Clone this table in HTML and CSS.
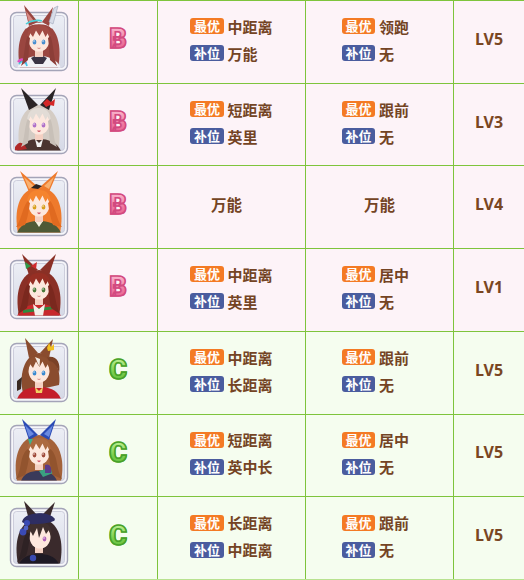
FILE: index.html
```html
<!DOCTYPE html>
<html lang="zh">
<head>
<meta charset="utf-8">
<title>表</title>
<link rel="stylesheet" href="styles.css">
</head>
<body>
<svg class="defs" width="0" height="0">
  <defs>
    <clipPath id="cp"><rect x="4.5" y="13.5" width="51" height="52" rx="3"/></clipPath>
    <linearGradient id="bg" x1="0" y1="0" x2="0" y2="1"><stop offset="0" stop-color="#eceef5"/><stop offset="1" stop-color="#d6d9e6"/></linearGradient>
  </defs>
</svg>
<div class="table">
  <!-- row 1 -->
  <div class="row b">
    <div class="cell av">
      <svg viewBox="0 0 60 80" width="60" height="80">
        <rect x="1.5" y="10.5" width="57" height="58" rx="6" fill="#f6f6fa" stroke="#a4a4b8" stroke-width="1.4"/>
        <rect x="4.5" y="13.5" width="51" height="52" rx="3" fill="url(#bg)" stroke="#c4c4d4" stroke-width="0.8"/>
        <g clip-path="url(#cp)">
          <path d="M11 66 C7 46 10 22 30 20 C50 22 53 46 49 66Z" fill="#9a4640"/>
          <path d="M8 66 C12 57 21 54 30 54 C39 54 48 57 52 66Z" fill="#f2f2f6"/>
          <path d="M22 56 L30 52 L38 56 L34 62 L26 62Z" fill="#3a3444"/>
          <path d="M9 60 C12 56 16 57 17 62" stroke="#e050c8" stroke-width="2.4" fill="none"/>
          <path d="M10 62 C13 58 17 59 18 64" stroke="#40c8e8" stroke-width="1.6" fill="none"/>
          <rect x="26" y="46" width="8" height="9" fill="#f4d0c2"/>
          <ellipse cx="30" cy="38" rx="10.5" ry="11.5" fill="#fde8de"/>
          <ellipse cx="25.5" cy="40" rx="1.9" ry="2.6" fill="#4a90d0"/>
          <ellipse cx="34.5" cy="40" rx="1.9" ry="2.6" fill="#4a90d0"/>
          <circle cx="25" cy="39" r="0.7" fill="#fff"/><circle cx="34" cy="39" r="0.7" fill="#fff"/>
          <path d="M28.5 46 Q30 47 31.5 46" stroke="#c06060" stroke-width="0.7" fill="none"/>
          <path d="M18.5 40 C17 27 23 23 30 23 C37 23 43 27 41.5 40 L39 31 L36.5 35 L33.5 28.5 L30.5 34 L27 28.5 L24 35 L21 31Z" fill="#a24c44"/>
          <path d="M18.5 34 C15 44 16 54 12 64 L19 58 C20 50 20 42 21 36Z" fill="#8c3e38"/>
          <path d="M41.5 34 C45 44 44 54 48 64 L41 58 C40 50 40 42 39 36Z" fill="#8c3e38"/>
          <path d="M17 26 C22 20 38 20 43 26" stroke="#f4f4f8" stroke-width="1.6" fill="none"/>
        </g>
        <path d="M20 24 L15 3 L29 20Z" fill="#9a4640"/>
        <path d="M20 21 L17 9 L25 19Z" fill="#d88a86"/>
        <path d="M40 24 L44 5 L33 20Z" fill="#9a4640"/>
        <path d="M45 6 L49 4 L44 22 L40 20Z" fill="#d8dce8" stroke="#9ca4b8" stroke-width="0.6"/>
        <path d="M17 22 C22 18 30 18 33 19" stroke="#48d0d8" stroke-width="1.6" fill="none"/>
      </svg>
    </div>
    <div class="cell grade gb"><span>B</span></div>
    <div class="cell"><div class="pos"><div class="ln"><span class="tag best">最优</span>中距离</div><div class="ln"><span class="tag sub">补位</span>万能</div></div></div>
    <div class="cell c4"><div class="pos"><div class="ln"><span class="tag best">最优</span>领跑</div><div class="ln"><span class="tag sub">补位</span>无</div></div></div>
    <div class="cell lv">LV5</div>
  </div>
  <!-- row 2 -->
  <div class="row b">
    <div class="cell av">
      <svg viewBox="0 0 60 80" width="60" height="80">
        <rect x="1.5" y="10.5" width="57" height="58" rx="6" fill="#f6f6fa" stroke="#a4a4b8" stroke-width="1.4"/>
        <rect x="4.5" y="13.5" width="51" height="52" rx="3" fill="url(#bg)" stroke="#c4c4d4" stroke-width="0.8"/>
        <g clip-path="url(#cp)">
          <path d="M11 66 C7 46 10 22 30 20 C50 22 53 46 49 66Z" fill="#d4ccc4"/>
          <path d="M8 66 C12 57 21 54 30 54 C39 54 48 57 52 66Z" fill="#4a3430"/>
          <path d="M6 62 C10 56 14 56 18 64 L6 66Z" fill="#b02828"/>
          <path d="M26 54 L30 58 L34 54 L32 62 L28 62Z" fill="#f0f0f0"/>
          <rect x="26" y="46" width="8" height="9" fill="#f4d0c2"/>
          <ellipse cx="30" cy="38" rx="10.5" ry="11.5" fill="#fde8de"/>
          <ellipse cx="25.5" cy="40" rx="1.9" ry="2.6" fill="#b070c8"/>
          <ellipse cx="34.5" cy="40" rx="1.9" ry="2.6" fill="#b070c8"/>
          <circle cx="25" cy="39" r="0.7" fill="#fff"/><circle cx="34" cy="39" r="0.7" fill="#fff"/>
          <path d="M28 45.5 Q30 48.5 32 45.5Z" fill="#d05a6a"/>
          <path d="M18.5 40 C17 27 23 23 30 23 C37 23 43 27 41.5 40 L39 31 L36.5 35 L33.5 28.5 L30.5 34 L27 28.5 L24 35 L21 31Z" fill="#e2dcd6"/>
          <path d="M18.5 34 C15 44 16 54 12 62 L19 58 C20 50 20 42 21 36Z" fill="#c8c0b8"/>
          <path d="M41.5 34 C45 44 44 54 48 62 L41 58 C40 50 40 42 39 36Z" fill="#c8c0b8"/>
        </g>
        <path d="M20 25 L12 3 L29 20Z" fill="#2a2426"/>
        <path d="M40 25 L47 3 L31 20Z" fill="#2a2426"/>
        <path d="M34 18 L38 14 L42 17 L46 14 L45 21 L41 20 L37 22Z" fill="#d42828"/>
      </svg>
    </div>
    <div class="cell grade gb"><span>B</span></div>
    <div class="cell"><div class="pos"><div class="ln"><span class="tag best">最优</span>短距离</div><div class="ln"><span class="tag sub">补位</span>英里</div></div></div>
    <div class="cell c4"><div class="pos"><div class="ln"><span class="tag best">最优</span>跟前</div><div class="ln"><span class="tag sub">补位</span>无</div></div></div>
    <div class="cell lv">LV3</div>
  </div>
  <!-- row 3 -->
  <div class="row b">
    <div class="cell av">
      <svg viewBox="0 0 60 80" width="60" height="80">
        <rect x="1.5" y="10.5" width="57" height="58" rx="6" fill="#f6f6fa" stroke="#a4a4b8" stroke-width="1.4"/>
        <rect x="4.5" y="13.5" width="51" height="52" rx="3" fill="url(#bg)" stroke="#c4c4d4" stroke-width="0.8"/>
        <g clip-path="url(#cp)">
          <path d="M9 66 C5 46 8 22 30 20 C52 22 55 46 51 66Z" fill="#ee7a2c"/>
          <path d="M8 66 C12 56 21 54 30 54 C39 54 48 56 52 66Z" fill="#4e5a36"/>
          <path d="M26 54 L30 60 L34 54Z" fill="#f4f0e0"/>
          <rect x="26" y="46" width="8" height="9" fill="#f4d0c2"/>
          <ellipse cx="30" cy="38" rx="10.5" ry="11.5" fill="#fde8de"/>
          <ellipse cx="25.5" cy="40" rx="1.9" ry="2.6" fill="#d8a020"/>
          <ellipse cx="34.5" cy="40" rx="1.9" ry="2.6" fill="#d8a020"/>
          <circle cx="25" cy="39" r="0.7" fill="#fff"/><circle cx="34" cy="39" r="0.7" fill="#fff"/>
          <path d="M28 45.5 Q30 49 32 45.5Z" fill="#d05a6a"/>
          <path d="M18.5 40 C17 27 23 23 30 23 C37 23 43 27 41.5 40 L39 31 L36.5 35 L33.5 28.5 L30.5 34 L27 28.5 L24 35 L21 31Z" fill="#f5842e"/>
          <path d="M18.5 34 C13 42 12 54 7 60 L16 58 C19 50 20 42 21 36Z" fill="#e06a20"/>
          <path d="M41.5 34 C47 42 48 54 53 60 L44 58 C41 50 40 42 39 36Z" fill="#e06a20"/>
        </g>
        <path d="M20 25 L11 4 L29 20Z" fill="#ee7a2c"/>
        <path d="M20 22 L15 10 L25 19Z" fill="#f8b070"/>
        <path d="M40 25 L49 4 L31 20Z" fill="#ee7a2c"/>
        <path d="M40 22 L45 10 L35 19Z" fill="#f8b070"/>
        <path d="M22 21 L27 17 L33 19 L29 22Z" fill="#2a2222"/>
      </svg>
    </div>
    <div class="cell grade gb"><span>B</span></div>
    <div class="cell txt c3"><span class="plain">万能</span></div>
    <div class="cell txt"><span class="plain">万能</span></div>
    <div class="cell lv">LV4</div>
  </div>
  <!-- row 4 -->
  <div class="row b">
    <div class="cell av">
      <svg viewBox="0 0 60 80" width="60" height="80">
        <rect x="1.5" y="10.5" width="57" height="58" rx="6" fill="#f6f6fa" stroke="#a4a4b8" stroke-width="1.4"/>
        <rect x="4.5" y="13.5" width="51" height="52" rx="3" fill="url(#bg)" stroke="#c4c4d4" stroke-width="0.8"/>
        <g clip-path="url(#cp)">
          <path d="M10 66 C6 46 9 22 30 20 C51 22 54 46 50 66Z" fill="#8a3026"/>
          <path d="M8 66 C12 57 21 54 30 54 C39 54 48 57 52 66Z" fill="#c8282c"/>
          <path d="M14 60 L46 56 L46 59 L14 63Z" fill="#2e8a3e"/>
          <path d="M24 54 L30 59 L36 54 L34 66 L26 66Z" fill="#f4f0ea"/>
          <rect x="26" y="46" width="8" height="9" fill="#f4d0c2"/>
          <ellipse cx="30" cy="38" rx="10.5" ry="11.5" fill="#fde8de"/>
          <ellipse cx="25.5" cy="40" rx="1.9" ry="2.4" fill="#4a7a3a"/>
          <ellipse cx="34.5" cy="40" rx="1.9" ry="2.4" fill="#4a7a3a"/>
          <circle cx="25" cy="39" r="0.7" fill="#fff"/><circle cx="34" cy="39" r="0.7" fill="#fff"/>
          <path d="M28.5 46 Q30 47 31.5 46" stroke="#c06060" stroke-width="0.7" fill="none"/>
          <path d="M18.5 40 C17 27 23 23 30 23 C37 23 43 27 41.5 40 L39 31 L36.5 35 L33.5 28.5 L30.5 34 L27 28.5 L24 35 L21 31Z" fill="#962f24"/>
          <path d="M18.5 34 C13 44 14 54 9 64 L18 58 C20 50 20 42 21 36Z" fill="#7a281e"/>
          <path d="M41.5 34 C47 44 46 54 51 64 L42 58 C40 50 40 42 39 36Z" fill="#7a281e"/>
        </g>
        <path d="M20 25 L13 4 L29 20Z" fill="#8a3026"/>
        <path d="M40 25 L47 4 L31 20Z" fill="#8a3026"/>
        <path d="M16 12 L22 16 L17 19Z" fill="#2e9a48"/>
        <path d="M22 16 L28 12 L27 19Z" fill="#d02c30"/>
      </svg>
    </div>
    <div class="cell grade gb"><span>B</span></div>
    <div class="cell"><div class="pos"><div class="ln"><span class="tag best">最优</span>中距离</div><div class="ln"><span class="tag sub">补位</span>英里</div></div></div>
    <div class="cell c4"><div class="pos"><div class="ln"><span class="tag best">最优</span>居中</div><div class="ln"><span class="tag sub">补位</span>无</div></div></div>
    <div class="cell lv">LV1</div>
  </div>
  <!-- row 5 -->
  <div class="row c">
    <div class="cell av">
      <svg viewBox="0 0 60 80" width="60" height="80">
        <rect x="1.5" y="10.5" width="57" height="58" rx="6" fill="#f6f6fa" stroke="#a4a4b8" stroke-width="1.4"/>
        <rect x="4.5" y="13.5" width="51" height="52" rx="3" fill="url(#bg)" stroke="#c4c4d4" stroke-width="0.8"/>
        <g clip-path="url(#cp)">
          <path d="M14 60 C10 44 14 22 30 20 C48 22 52 40 50 52Z" fill="#8a4c2e"/>
          <path d="M8 66 C12 56 21 54 30 54 C39 54 48 56 52 66Z" fill="#c41e2a"/>
          <path d="M26 54 L30 58 L34 54 L33 60 L27 60Z" fill="#f0d060"/>
          <rect x="26" y="46" width="8" height="9" fill="#f4d0c2"/>
          <ellipse cx="30" cy="38" rx="10.5" ry="11.5" fill="#fde8de"/>
          <ellipse cx="25.5" cy="40" rx="1.9" ry="2.6" fill="#3a8ad0"/>
          <ellipse cx="34.5" cy="40" rx="1.9" ry="2.6" fill="#3a8ad0"/>
          <circle cx="25" cy="39" r="0.7" fill="#fff"/><circle cx="34" cy="39" r="0.7" fill="#fff"/>
          <path d="M28.5 46 Q30 47 31.5 46" stroke="#c06060" stroke-width="0.7" fill="none"/>
          <path d="M18.5 40 C17 27 23 23 30 23 C37 23 43 27 41.5 40 L39 31 L36.5 35 L33.5 28.5 L30.5 34 L27 28.5 L24 35 L21 31Z" fill="#8e5030"/>
          <path d="M26 24 C28 28 29 31 30.5 34 L31 26Z" fill="#f4ece4"/>
          <path d="M38 24 C48 22 52 30 50 40 C48 32 44 28 40 28Z" fill="#7a4228"/>
          <path d="M8 48 L13 44 L12 56 L8 58Z" fill="#3a2a22"/>
        </g>
        <path d="M20 25 L16 5 L29 20Z" fill="#8a4c2e"/>
        <path d="M40 25 L44 6 L31 20Z" fill="#8a4c2e"/>
        <path d="M38 15 L40 10 L42 14 L45 11 L45 17 L39 18Z" fill="#f2c020"/>
      </svg>
    </div>
    <div class="cell grade gc"><span>C</span></div>
    <div class="cell"><div class="pos"><div class="ln"><span class="tag best">最优</span>中距离</div><div class="ln"><span class="tag sub">补位</span>长距离</div></div></div>
    <div class="cell c4"><div class="pos"><div class="ln"><span class="tag best">最优</span>跟前</div><div class="ln"><span class="tag sub">补位</span>无</div></div></div>
    <div class="cell lv">LV5</div>
  </div>
  <!-- row 6 -->
  <div class="row c">
    <div class="cell av">
      <svg viewBox="0 0 60 80" width="60" height="80">
        <rect x="1.5" y="10.5" width="57" height="58" rx="6" fill="#f6f6fa" stroke="#a4a4b8" stroke-width="1.4"/>
        <rect x="4.5" y="13.5" width="51" height="52" rx="3" fill="url(#bg)" stroke="#c4c4d4" stroke-width="0.8"/>
        <g clip-path="url(#cp)">
          <path d="M8 66 C4 46 8 22 30 20 C52 22 56 46 52 66Z" fill="#a4623a"/>
          <path d="M12 66 C15 58 22 56 30 56 C38 56 45 58 48 66Z" fill="#3a3a5a"/>
          <path d="M30 56 L42 52 L44 58 L34 62Z" fill="#3aa080"/>
          <path d="M36 50 C40 48 44 52 42 58 L36 58Z" fill="#5a3a8a"/>
          <rect x="26" y="46" width="8" height="9" fill="#f4d0c2"/>
          <ellipse cx="30" cy="38" rx="10.5" ry="11.5" fill="#fde8de"/>
          <ellipse cx="25.5" cy="40" rx="1.9" ry="2.4" fill="#a04a3a"/>
          <ellipse cx="34.5" cy="40" rx="1.9" ry="2.4" fill="#a04a3a"/>
          <circle cx="25" cy="39" r="0.7" fill="#fff"/><circle cx="34" cy="39" r="0.7" fill="#fff"/>
          <path d="M28 45.5 Q30 49 32 45.5Z" fill="#d05a6a"/>
          <path d="M18.5 40 C17 27 23 23 30 23 C37 23 43 27 41.5 40 L39 31 L36.5 35 L33.5 28.5 L30.5 34 L27 28.5 L24 35 L21 31Z" fill="#ac6a40"/>
          <path d="M18.5 34 C10 42 14 52 7 64 L16 60 C19 52 20 42 21 36Z" fill="#92542e"/>
          <path d="M41.5 34 C50 42 46 52 53 64 L44 60 C41 52 40 42 39 36Z" fill="#92542e"/>
        </g>
        <path d="M20 25 L13 4 L29 20Z" fill="#2a4ab4"/>
        <path d="M20 22 L16 10 L25 19Z" fill="#6a8ae0"/>
        <path d="M40 25 L47 4 L31 20Z" fill="#2a4ab4"/>
        <path d="M40 22 L44 10 L35 19Z" fill="#6a8ae0"/>
        <path d="M19 24 L21 30 L24 24Z" fill="#40b088"/>
      </svg>
    </div>
    <div class="cell grade gc"><span>C</span></div>
    <div class="cell"><div class="pos"><div class="ln"><span class="tag best">最优</span>短距离</div><div class="ln"><span class="tag sub">补位</span>英中长</div></div></div>
    <div class="cell c4"><div class="pos"><div class="ln"><span class="tag best">最优</span>居中</div><div class="ln"><span class="tag sub">补位</span>无</div></div></div>
    <div class="cell lv">LV5</div>
  </div>
  <!-- row 7 -->
  <div class="row c">
    <div class="cell av">
      <svg viewBox="0 0 60 80" width="60" height="80">
        <rect x="1.5" y="10.5" width="57" height="58" rx="6" fill="#f6f6fa" stroke="#a4a4b8" stroke-width="1.4"/>
        <rect x="4.5" y="13.5" width="51" height="52" rx="3" fill="url(#bg)" stroke="#c4c4d4" stroke-width="0.8"/>
        <g clip-path="url(#cp)">
          <path d="M9 66 C5 46 8 22 30 20 C52 22 55 46 51 66Z" fill="#3a2a2c"/>
          <path d="M10 66 C14 58 22 56 30 56 C38 56 46 58 50 66Z" fill="#1e1a24"/>
          <circle cx="24" cy="60" r="3.2" fill="#3a4ab0"/>
          <rect x="26" y="46" width="8" height="9" fill="#f4d0c2"/>
          <ellipse cx="31" cy="39" rx="10.5" ry="11.5" fill="#fde8de"/>
          <ellipse cx="35.5" cy="41" rx="1.9" ry="2.4" fill="#b060b8"/>
          <circle cx="35" cy="40" r="0.7" fill="#fff"/>
          <path d="M18 44 C17 27 22 24 30 24 C37 24 44 27 42.5 40 L40 32 L37 36 L34 29 L30 40 L28 30 L24 38 L21 32Z" fill="#40302e"/>
          <path d="M18 34 C12 44 14 54 8 64 L17 58 C20 50 20 42 21 36Z" fill="#2e2224"/>
          <path d="M13 24 C14 14 40 12 46 22 C42 26 18 28 13 24Z" fill="#2e2e62"/>
          <circle cx="14" cy="34" r="3.4" fill="#3a4ab4"/>
          <circle cx="17" cy="30" r="2.4" fill="#5062c8"/>
        </g>
        <path d="M20 22 L15 3 L29 18Z" fill="#3a2a2c"/>
        <path d="M40 22 L46 4 L32 18Z" fill="#3a2a2c"/>
        <path d="M14 23 C15 14 40 12 46 21 C42 25 18 27 14 23Z" fill="#2e2e62"/>
        <circle cx="18" cy="25" r="3" fill="#3a4ab4"/>
      </svg>
    </div>
    <div class="cell grade gc"><span>C</span></div>
    <div class="cell"><div class="pos"><div class="ln"><span class="tag best">最优</span>长距离</div><div class="ln"><span class="tag sub">补位</span>中距离</div></div></div>
    <div class="cell c4"><div class="pos"><div class="ln"><span class="tag best">最优</span>跟前</div><div class="ln"><span class="tag sub">补位</span>无</div></div></div>
    <div class="cell lv">LV5</div>
  </div>
</div>
</body>
</html>
```

FILE: styles.css
```css
* { box-sizing: border-box; }
html, body { margin: 0; padding: 0; background: #ffffff; }
body {
  font-family: "Noto Sans CJK SC", "Noto Sans", sans-serif;
  color: #744424;
  width: 524px;
  height: 580px;
  overflow: hidden;
}
.defs { position: absolute; width: 0; height: 0; }
.table {
  display: grid;
  grid-template-columns: 78px 78px 147px 147px 70px;
  grid-template-rows: repeat(7, 1fr);
  gap: 1px;
  background: #7ec43c;
  padding-top: 1px;
  height: 580px;
  width: 524px;
  border-bottom: 1px solid #b8e290;
}
.row { display: contents; }
.cell {
  display: flex;
  align-items: center;
  justify-content: center;
  min-width: 0;
  overflow: visible;
}
.row.b .cell { background: #fdf3f8; }
.row.c .cell { background: #f5fdef; }
.av svg { display: block; }
.grade span {
  font-family: Roboto, "Noto Sans", sans-serif;
  font-weight: 900;
  font-size: 27px;
  line-height: 1;
  color: transparent;
  -webkit-background-clip: text;
  background-clip: text;
  margin-top: -4px;
}
.gb span {
  background-image: linear-gradient(#fbbcd2, #ee7aa2 55%, #e2588a);
  -webkit-text-stroke: 1.6px #d24a80;
}
.gc span {
  background-image: linear-gradient(#c6f49a, #7cd050 55%, #5cb836);
  -webkit-text-stroke: 1.6px #48a02a;
}
.pos { display: flex; flex-direction: column; margin-bottom: 4px; }
.c4 .pos { margin-right: 8px; }
.ln {
  display: flex;
  align-items: center;
  height: 27px;
  font-size: 15px;
  font-weight: 700;
  white-space: nowrap;
}
.tag {
  display: inline-block;
  height: 16px;
  line-height: 16px;
  padding: 0 3.5px;
  margin-right: 4px;
  border-radius: 3px;
  color: #ffffff;
  font-size: 13px;
  font-weight: 700;
}
.best { background: #f47a24; }
.sub { background: #4a5c9e; }
.plain { font-size: 15.5px; font-weight: 700; margin-bottom: 6px; }
.c3 .plain { margin-right: 10px; }
.lv {
  font-family: "Noto Sans", "Open Sans", sans-serif;
  font-weight: 700;
  font-size: 16px;
  color: #7a4622;
  padding-bottom: 6px;
}
```
